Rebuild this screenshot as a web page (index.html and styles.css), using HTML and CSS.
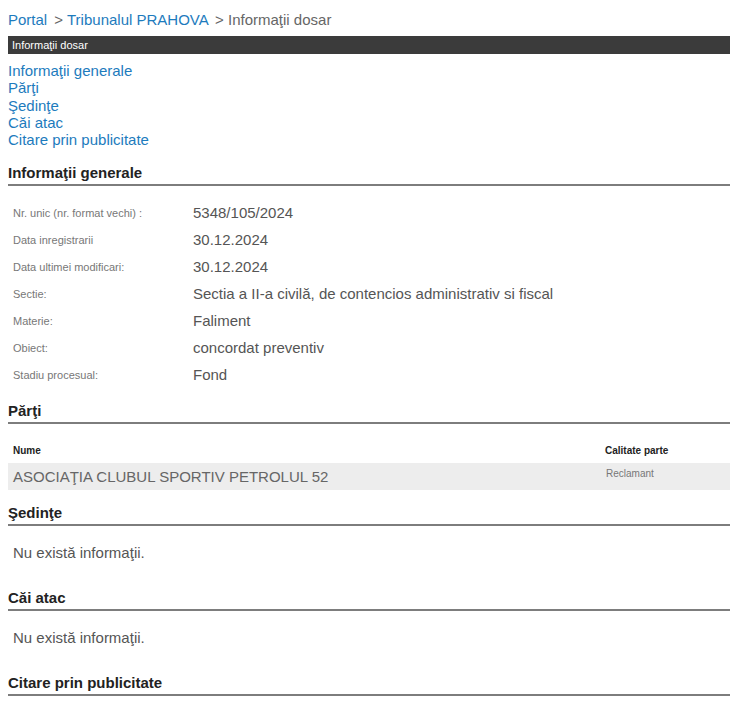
FILE: index.html
```html
<!DOCTYPE html>
<html lang="ro">
<head>
    <meta charset="UTF-8">
    <meta name="viewport" content="width=device-width, initial-scale=1.0">
    <title>Informaţii dosar</title>
    <link rel="stylesheet" href="styles.css">
</head>
<body>
    <div class="breadcrumb">
        <a href="#">Portal</a>
        <span class="sep">&gt; <a href="#">Tribunalul PRAHOVA</a></span>
        <span class="sep">&gt; Informaţii dosar</span>
    </div>
    <div class="titlebar">Informaţii dosar</div>

    <div class="toc">
        <a href="#generale">Informaţii generale</a>
        <a href="#parti">Părţi</a>
        <a href="#sedinte">Şedinţe</a>
        <a href="#cai">Căi atac</a>
        <a href="#citare">Citare prin publicitate</a>
    </div>

    <h2 class="section-title" id="generale">Informaţii generale</h2>
    <div class="info-grid">
        <div class="label">Nr. unic (nr. format vechi) :</div>
        <div class="value">5348/105/2024</div>
        <div class="label">Data inregistrarii</div>
        <div class="value">30.12.2024</div>
        <div class="label">Data ultimei modificari:</div>
        <div class="value">30.12.2024</div>
        <div class="label">Sectie:</div>
        <div class="value">Sectia a II-a civilă, de contencios administrativ si fiscal</div>
        <div class="label">Materie:</div>
        <div class="value">Faliment</div>
        <div class="label">Obiect:</div>
        <div class="value">concordat preventiv</div>
        <div class="label">Stadiu procesual:</div>
        <div class="value">Fond</div>
    </div>

    <h2 class="section-title" id="parti">Părţi</h2>
    <div class="parti">
        <div class="parti-head">
            <div>Nume</div>
            <div>Calitate parte</div>
        </div>
        <div class="parti-row">
            <div class="nume">ASOCIAŢIA CLUBUL SPORTIV PETROLUL 52</div>
            <div class="calitate">Reclamant</div>
        </div>
    </div>

    <h2 class="section-title" id="sedinte">Şedinţe</h2>
    <p class="empty">Nu există informaţii.</p>

    <h2 class="section-title" id="cai">Căi atac</h2>
    <p class="empty">Nu există informaţii.</p>

    <h2 class="section-title" id="citare">Citare prin publicitate</h2>
</body>
</html>
```

FILE: styles.css
```css
body {
    font-family: "Liberation Sans", Arial, sans-serif;
    margin: 8px;
    color: #555;
    background: #fff;
}
a {
    color: #1d7bbd;
    text-decoration: none;
}
.breadcrumb {
    font-size: 15px;
    line-height: 18px;
    padding-top: 3px;
    margin-bottom: 7px;
    color: #666;
}
.breadcrumb .sep {
    margin-left: 3px;
}
.titlebar {
    background-color: #3b3b3b;
    color: #fff;
    font-size: 11px;
    line-height: 18px;
    padding-left: 4px;
}
.toc {
    margin-top: 8px;
    padding-bottom: 2px;
    font-size: 15px;
    line-height: 17.3px;
}
.toc a {
    display: block;
}
.section-title {
    font-size: 15px;
    font-weight: bold;
    line-height: 18px;
    color: #222;
    margin: 14px 0 0 0;
    padding-bottom: 2px;
    border-bottom: 2px solid #7d7d7d;
}
.info-grid {
    display: grid;
    grid-template-columns: 185px 1fr;
    grid-auto-rows: 27px;
    align-items: center;
    margin-top: 13px;
}
.info-grid .label {
    font-size: 11px;
    color: #777;
    padding-left: 5px;
}
.info-grid .value {
    font-size: 15px;
    color: #555;
}
.parti-head,
.parti-row {
    display: grid;
    grid-template-columns: 592px 1fr;
}
.parti-head {
    font-size: 10px;
    font-weight: bold;
    color: #222;
    line-height: 14px;
    padding: 20px 0 5px 0;
}
.parti-head div {
    padding-left: 5px;
}
.parti-row {
    background-color: #ededed;
    height: 27px;
}
.parti-row .nume {
    font-size: 15px;
    line-height: 27px;
    padding-left: 5px;
    color: #666;
}
.parti-row .calitate {
    font-size: 10px;
    line-height: 14px;
    padding: 4px 0 0 6px;
    color: #777;
}
.empty {
    font-size: 15px;
    line-height: 18px;
    color: #555;
    margin: 18px 0 13px 5px;
}
.empty + .section-title {
    margin-top: 27px;
}
```
